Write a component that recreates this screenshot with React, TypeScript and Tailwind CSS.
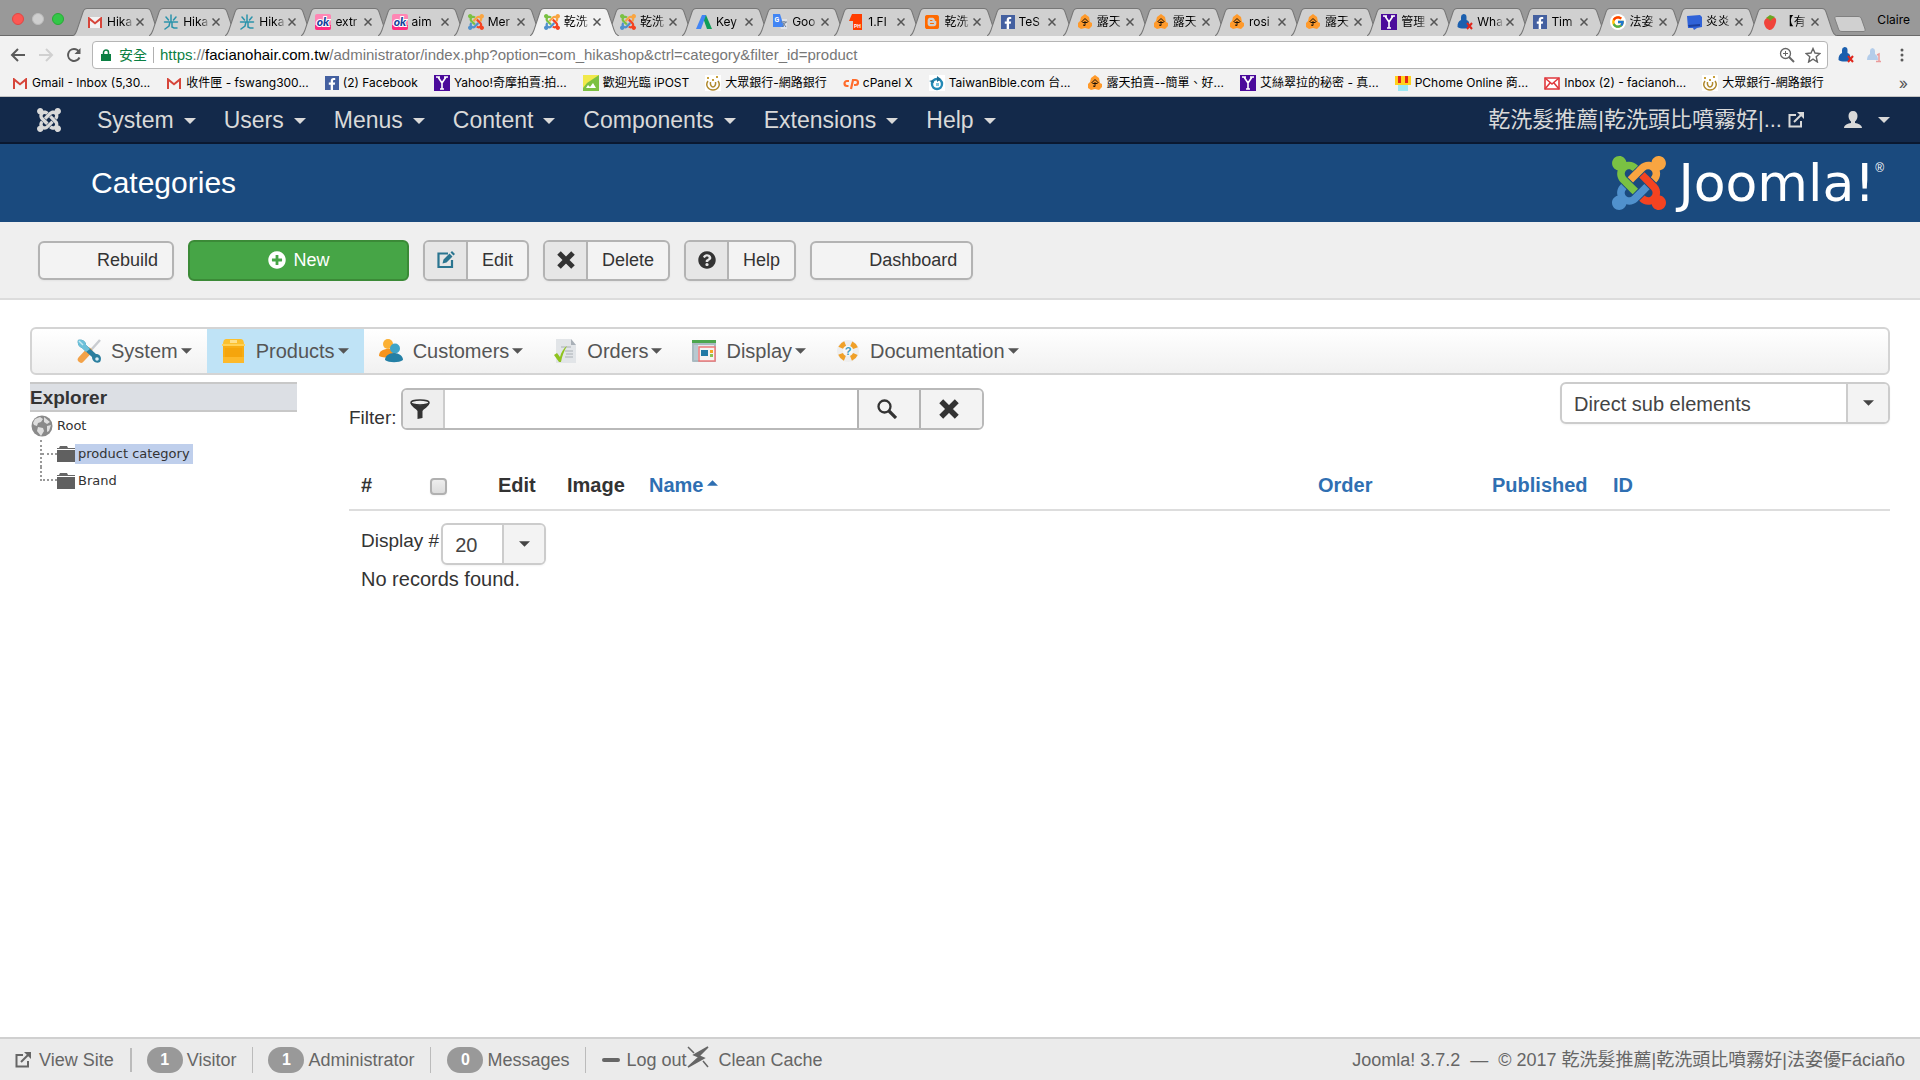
import React from 'react';
import { FaBlogger, FaFacebookF, FaQuestionCircle, FaPlusCircle } from 'react-icons/fa';
import { FcGoogle } from 'react-icons/fc';

const JOOMLA_ARMS = [
  {
    color: '#7ac143',
    d: 'M.6 92.1C.6 58.8 27.4 32 60.4 32c30 0 54.5 21.9 59.2 50.2 32.6-7.6 67.1.6 96.5 30l-44.3 44.3c-20.5-20.5-42.6-16.3-55.4-3.5-14.3 14.3-14.3 37.9 0 52.2l99.5 99.5-44 44.3c-87.7-87.2-49.7-49.7-99.8-99.7-26.8-26.5-35-64.8-24.8-98.9C20.4 144.6.6 120.7.6 92.1z',
  },
  {
    color: '#f9a541',
    d: 'M130.1 208.5l44.3 44.3c10-10 89.7-89.7 99.7-99.8 14.3-14.3 37.6-14.3 51.9 0 12.8 12.8 17 35-3.5 55.4l44 44.3c31.2-31.2 38.5-67.6 28.9-101.2 29.2-4.1 51.9-29.2 51.9-59.5 0-33.2-26.8-60.1-59.8-60.1-30.3 0-55.4 22.5-59.5 51.6-33.8-9.9-71.7-1.5-98.3 25.1-18.3 19.1-71.1 71.5-99.6 99.9z',
  },
  {
    color: '#f44321',
    d: 'M396.4 360.7c8.2-32.7-.9-68.5-26.3-93.9-11.8-12.2 5 4.7-99.5-99.7l-44.3 44.3 99.7 99.7c14.3 14.3 14.3 37.6 0 51.9-12.8 12.8-35 17-55.4-3.5l-44 44.3c27.6 30.2 68 38.8 102.7 28 5.5 27.4 29.7 48.1 58.9 48.1 33 0 59.8-26.8 59.8-60.1 0-30.2-22.5-55-51.6-59.1z',
  },
  {
    color: '#5091cd',
    d: 'M312.1 307.6l-44-44.3c-87 86.4-50.4 50.4-99.7 99.8-14.3 14.3-37.6 14.3-51.9 0-13.1-13.4-16.9-35.3 3.2-55.4l-44-44.3c-30.2 30.2-38 65.2-29.5 98.3-26.7 6-46.2 29.9-46.2 58.2C0 453.2 26.8 480 59.8 480c28.6 0 52.5-19.8 58.6-46.7 32.7 8.2 68.5-.6 94.2-26 32.1-32 12.2-12.4 99.5-99.7z',
  },
];

function JoomlaMark({ className, mono }: { className: string; mono?: boolean }) {
  return (
    <svg viewBox="0 32 448 448" className={className} aria-hidden="true">
      {JOOMLA_ARMS.map((arm) => (
        <path key={arm.color} d={arm.d} fill={mono ? 'currentColor' : arm.color} />
      ))}
    </svg>
  );
}

function Favicon({ kind }: { kind: string }) {
  switch (kind) {
    case 'joomla':
      return <JoomlaMark className="w-4 h-4 shrink-0" />;
    case 'google':
      return (
        <span className="w-4 h-4 shrink-0 rounded-full bg-white flex items-center justify-center">
          <FcGoogle className="w-3.5 h-3.5" />
        </span>
      );
    case 'facebook':
      return (
        <span className="w-3.5 h-3.5 shrink-0 bg-[#4460a0] flex items-end justify-end pr-0.5">
          <FaFacebookF className="w-2.5 h-3 text-white" />
        </span>
      );
    case 'blogger':
      return <FaBlogger className="w-4 h-4 shrink-0 text-[#ff6a00]" />;
    default:
      return (
        <svg viewBox="0 0 16 16" className="w-4 h-4 shrink-0" aria-hidden="true">
          {kind === 'gmail' && (
            <>
              <path d="M1 3h14v11H1z" fill="#f3f3f3" />
              <path d="M1 14V3h1l6 5 6-5h1v11h-2V6.500L8 10.500 3 6.500V14z" fill="#d6453a" />
            </>
          )}
          {kind === 'inbox' && (
            <>
              <path d="M1 3h14v11H1z" fill="#fff" stroke="#e0393e" strokeWidth="1.600" />
              <path d="M1 3l7 6 7-6M1 14l5-6M15 14l-5-6" fill="none" stroke="#e0393e" strokeWidth="1.600" />
            </>
          )}
          {kind === 'hika' && (
            <path
              d="M8 1v6M3 3l2.500 3M13 3l-2.500 3M1.500 8h13M7 8l-1 4-4 3M9 8v5l2 1h3"
              fill="none"
              stroke="#2b93ab"
              strokeWidth="1.500"
              strokeLinecap="round"
            />
          )}
          {kind === 'ok' && (
            <>
              <rect width="16" height="16" rx="2" fill="#ff86b4" />
              <path d="M0 11h16v3a2 2 0 01-2 2H2a2 2 0 01-2-2z" fill="#ff2d80" />
              <text x="8" y="12" textAnchor="middle" fontSize="12" fontWeight="900" fontStyle="italic" fontFamily="Lato, sans-serif" fill="#123f9c" stroke="#fff" strokeWidth="2" paintOrder="stroke">ok</text>
            </>
          )}
          {kind === 'ads' && (
            <>
              <path d="M6 1h4l6 14h-5z" fill="#0f9d58" />
              <path d="M6 1h4l-5 14H0z" fill="#4285f4" />
            </>
          )}
          {kind === 'translate' && (
            <>
              <path d="M6 5h9v10H9z" fill="#dfe3ea" />
              <path d="M1 0h7l4 13H1z" fill="#4285f4" />
              <text x="5" y="8" textAnchor="middle" fontSize="7" fontWeight="700" fontFamily="Roboto, sans-serif" fill="#fff">G</text>
              <path d="M9 8h6M12 7v1M10 13l4-5M11 9l3 4" stroke="#6b7c93" fill="none" />
            </>
          )}
          {kind === 'ph' && (
            <>
              <path d="M4 0h10v16H5V7H1z" fill="#ff3d00" />
              <text x="9.500" y="14" textAnchor="middle" fontSize="5" fontWeight="700" fontFamily="Roboto, sans-serif" fill="#fff">PH</text>
            </>
          )}
          {kind === 'ruten' && (
            <>
              <path d="M8 0l4 3 1 5 2 1v3l-3 3-4-1-4 1-3-2V9l2-2 1-4z" fill="#ff9a2b" />
              <path d="M4.500 8L8 4.500 11.500 8M5.500 8.500h5M8 7v4.500M6 11l2 .5" fill="none" stroke="#1c1208" />
            </>
          )}
          {kind === 'yahoo' && (
            <>
              <path d="M0 0h16v16H0z" fill="#4b0a9b" />
              <path d="M4 2l4 6 4-6M8 8v6M2 2h4M10 2h4M6 14h4" fill="none" stroke="#fff" strokeWidth="1.600" />
            </>
          )}
          {kind === 'person' && (
            <>
              <path d="M6.500 0a3 3 0 013 3v3c3 1 3 4 3 7-3 2-9 2-12 0 0-4 1-6 3.500-7V3a3 3 0 012.500-3z" fill="#1b5fae" />
              <path d="M10 9l5 6M15 9l-5 6" stroke="#e0261c" strokeWidth="2" />
            </>
          )}
          {kind === 'personFaded' && (
            <>
              <path d="M6.500 1a3 3 0 012.500 3v3c2 1 3 3 3 6H1c0-3 1-5 3-6V4a3 3 0 012.500-3z" fill="#b4cdea" />
              <path d="M11 8l2-1v7M10 14.500h5" stroke="#ea9c9c" strokeWidth="1.500" fill="none" />
            </>
          )}
          {kind === 'book' && (
            <>
              <path d="M1 2l13-1 2 2v10l-5 1-3 2-1-2H2z" fill="#2f62d8" />
              <path d="M2 11l12-1v2L3 13z" fill="#1b3f9e" />
            </>
          )}
          {kind === 'berry' && (
            <>
              <path d="M8 4c4-2 7 0 6 4-1 5-4 8-6 8s-5-2-6-7c0-4 3-6 6-5z" fill="#f0433a" />
              <path d="M4 4l4-3 5 2-3 2-2 2-1-2z" fill="#6aa522" />
            </>
          )}
          {kind === 'ipost' && (
            <>
              <path d="M0 0h16v16H0z" fill="#7cc142" />
              <path d="M0 0h16L4 8 0 13z" fill="#f1e94b" />
              <path d="M3 13l2-3 2 2 3-4 3 5z" fill="#fff" />
            </>
          )}
          {kind === 'bank' && (
            <>
              <path d="M0 0h16v16H0z" fill="#fff" />
              <path d="M3 6c-3 4 0 9 5 9s8-5 5-9M5.500 7c-.5 3 1 5 2.500 5s3-2 2.500-5" fill="none" stroke="#b08a2e" strokeWidth="1.500" />
              <path d="M2 2h2v2H2zM7 4h2v2H7zM11 1h2v2h-2z" fill="#c9a13d" />
            </>
          )}
          {kind === 'cpanel' && (
            <path d="M6 6H4a2.500 2.500 0 000 5h1.500M8 14l2-9h2.500a2.500 2.500 0 010 5H11" fill="none" stroke="#ff6c2c" strokeWidth="2.200" />
          )}
          {kind === 'bible' && (
            <>
              <path d="M0 0h16v16H0z" fill="#fff" />
              <circle cx="8" cy="9" r="5" fill="none" stroke="#2389b5" strokeWidth="2.400" />
              <path d="M8 1l4 3-4 3zM0 6l4-1 1 3z" fill="#1c6f96" />
              <path d="M7 8h3v3H7z" fill="#7dc4de" />
            </>
          )}
          {kind === 'pchome' && (
            <>
              <path d="M0 1h16v9H0z" fill="#ffd21c" />
              <path d="M3 1h3v7H3zM10 1h3v7h-3z" fill="#e5261c" />
              <path d="M3 10h10v6H3z" fill="#9be8f4" />
            </>
          )}
        </svg>
      );
  }
}

const tabs = [
  { icon: 'gmail', title: 'Hika' },
  { icon: 'hika', title: 'Hika' },
  { icon: 'hika', title: 'Hika' },
  { icon: 'ok', title: 'extr' },
  { icon: 'ok', title: 'aim' },
  { icon: 'joomla', title: 'Mer' },
  { icon: 'joomla', title: '乾洗', active: true },
  { icon: 'joomla', title: '乾洗' },
  { icon: 'ads', title: 'Key' },
  { icon: 'translate', title: 'Goo' },
  { icon: 'ph', title: '1.Fl' },
  { icon: 'blogger', title: '乾洗' },
  { icon: 'facebook', title: 'TeS' },
  { icon: 'ruten', title: '露天' },
  { icon: 'ruten', title: '露天' },
  { icon: 'ruten', title: 'rosi' },
  { icon: 'ruten', title: '露天' },
  { icon: 'yahoo', title: '管理' },
  { icon: 'person', title: 'Wha' },
  { icon: 'facebook', title: 'Tim' },
  { icon: 'google', title: '法姿' },
  { icon: 'book', title: '炎炎' },
  { icon: 'berry', title: '【有' },
];

const bookmarks = [
  { icon: 'gmail', title: 'Gmail - Inbox (5,30...' },
  { icon: 'gmail', title: '收件匣 - fswang300...' },
  { icon: 'facebook', title: '(2) Facebook' },
  { icon: 'yahoo', title: 'Yahoo!奇摩拍賣:拍...' },
  { icon: 'ipost', title: '歡迎光臨 iPOST' },
  { icon: 'bank', title: '大眾銀行-網路銀行' },
  { icon: 'cpanel', title: 'cPanel X' },
  { icon: 'bible', title: 'TaiwanBible.com 台...' },
  { icon: 'ruten', title: '露天拍賣--簡單、好...' },
  { icon: 'yahoo', title: '艾絲翠拉的秘密 - 真...' },
  { icon: 'pchome', title: 'PChome Online 商...' },
  { icon: 'inbox', title: 'Inbox (2) - facianoh...' },
  { icon: 'bank', title: '大眾銀行-網路銀行' },
];

function Browser() {
  return (
    <div className="bg-[#f2f2f2] text-black font-[Inter,'Noto_Sans_CJK_TC',sans-serif]">
      <div className="h-9 bg-[#999] border-b border-[#6b6b6b] flex">
        <div className="w-[73px] shrink-0 flex gap-2 pl-3 pt-[13px]">
          <span className="w-3 h-3 rounded-full bg-[#fc5753] border border-[#df4744]"></span>
          <span className="w-3 h-3 rounded-full bg-[#cfcfcf] border border-[#bdbdbd]"></span>
          <span className="w-3 h-3 rounded-full bg-[#33c748] border border-[#27aa35]"></span>
        </div>
        <ul className="flex-1 min-w-0 flex pt-2">
          {tabs.map((tab, idx) => (
            <li key={idx} className={`relative flex-1 min-w-0 h-7 ${tab.active ? 'z-10' : ''}`}>
              <svg viewBox="0 0 89 28" preserveAspectRatio="none" className="absolute top-0 left-0 h-full w-[117%]" aria-hidden="true">
                <path
                  d="M0 28C2 27 3 25 4 22L10 4C11 1 12 .5 14 .5H74C76 .5 77 1 78 4L84 22C85 25 86 27 89 28"
                  fill={tab.active ? '#f2f2f2' : '#d0d0d0'}
                  stroke="#777"
                />
              </svg>
              <div className="relative h-full flex items-center pl-3.5">
                <Favicon kind={tab.icon} />
                <span className="ml-1 w-[27px] overflow-hidden whitespace-nowrap text-xs [mask-image:linear-gradient(to_right,#000_65%,transparent)]">
                  {tab.title}
                </span>
                <button type="button" aria-label="Close tab" className="shrink-0 ml-0.5">
                  <svg viewBox="0 0 8 8" className="w-2 h-2">
                    <path d="M.5.5l7 7M7.500.5l-7 7" stroke="#555" strokeWidth="1.500" />
                  </svg>
                </button>
              </div>
            </li>
          ))}
        </ul>
        <div className="w-[96px] shrink-0 flex justify-between pr-2.5 pl-2.5">
          <button type="button" aria-label="New tab" className="mt-4 h-4">
            <svg viewBox="0 0 32 16" className="w-8 h-4">
              <path d="M3 .5h21c2 0 3 1 3.500 2.500L31 13c.5 2 0 2.500-2 2.500H8c-2 0-3-1-3.500-2.500L1 3C.5 1 1 .5 3 .5z" fill="#d0d0d0" stroke="#808080" />
            </svg>
          </button>
          <span className="mt-3 text-xs">Claire</span>
        </div>
      </div>

      <div className="flex items-center h-[39px] pl-2.5 pr-4 pb-px">
        <svg viewBox="0 0 16 16" className="w-4 h-4 shrink-0" fill="none" stroke="#5a5a5a" strokeWidth="2">
          <path d="M15 8H2M8 2L2 8l6 6" />
        </svg>
        <svg viewBox="0 0 16 16" className="w-4 h-4 shrink-0 ml-3" fill="none" stroke="#d0d0d0" strokeWidth="2">
          <path d="M1 8h13M8 2l6 6-6 6" />
        </svg>
        <svg viewBox="0 0 16 16" className="w-4 h-4 shrink-0 ml-3" fill="none" stroke="#5a5a5a" strokeWidth="2">
          <path d="M13.500 10.500A6 6 0 118 2c2 0 4 1 5 3" />
          <path d="M14.500 1v6h-6z" fill="#5a5a5a" stroke="none" />
        </svg>
        <div className="flex-1 min-w-0 ml-2.5 h-7 bg-white border border-[#b5b5b5] rounded flex items-center pl-2 pr-1.5 font-['Liberation_Sans','Noto_Sans_CJK_TC',sans-serif] text-sm">
          <svg viewBox="0 0 10 12" className="w-2.5 h-3 shrink-0">
            <path d="M0 5h10v7H0z" fill="#0b8043" />
            <path d="M2.500 6V3.500a2.500 2.500 0 015 0V6" fill="none" stroke="#0b8043" strokeWidth="1.500" />
          </svg>
          <span className="ml-2 text-[#0b8043]">安全</span>
          <span className="ml-1.5 mr-1.5 w-px h-4 bg-[#b0b0b0]"></span>
          <span className="text-[#777] text-[15px] truncate flex-1">
            <span className="text-[#0b8043]">https</span>://<span className="text-black">facianohair.com.tw</span>
            /administrator/index.php?option=com_hikashop&amp;ctrl=category&amp;filter_id=product
          </span>
          <svg viewBox="0 0 16 16" className="w-4 h-4 shrink-0" fill="none" stroke="#666">
            <circle cx="6.500" cy="6.500" r="5" strokeWidth="1.300" />
            <path d="M10 10l5 5" strokeWidth="2" />
            <path d="M4 6.500h5M6.500 4v5" />
          </svg>
          <svg viewBox="0 0 16 16" className="w-4 h-4 shrink-0 ml-2.5" fill="none" stroke="#666" strokeWidth="1.400">
            <path d="M8 1.500l2 4.500 5 .5-3.800 3.200L12.400 15 8 12.200 3.600 15l1.200-5.300L1 6.500 6 6z" />
          </svg>
        </div>
        <div className="ml-2.5 flex items-center gap-3">
          <Favicon kind="person" />
          <Favicon kind="personFaded" />
          <svg viewBox="0 0 4 16" className="w-1 h-4 ml-1.5" fill="#5a5a5a">
            <circle cx="2" cy="3" r="1.500" />
            <circle cx="2" cy="8" r="1.500" />
            <circle cx="2" cy="13" r="1.500" />
          </svg>
        </div>
      </div>

      <div className="h-[22px] border-b border-[#c4c4c4] flex items-start px-3 text-xs">
        <ul className="flex-1 min-w-0 overflow-hidden flex gap-4">
          {bookmarks.map((b, idx) => (
            <li key={idx}>
              <a href="#" className="flex items-center gap-1 whitespace-nowrap">
                <Favicon kind={b.icon} />
                {b.title}
              </a>
            </li>
          ))}
        </ul>
        <span className="text-[#555] text-base leading-4">»</span>
      </div>
    </div>
  );
}

function Caret({ className }: { className: string }) {
  return (
    <svg viewBox="0 0 12 6" className={className} fill="currentColor" aria-hidden="true">
      <path d="M0 0h12L6 6z" />
    </svg>
  );
}

function OutIcon({ className }: { className: string }) {
  return (
    <svg viewBox="0 0 16 16" className={className} fill="none" stroke="currentColor" strokeWidth="2" aria-hidden="true">
      <path d="M8 3H1.500v11.500H13V9" />
      <path d="M6 10l7-7" />
      <path d="M9 0h7v7z" fill="currentColor" stroke="none" />
    </svg>
  );
}

function CrossIcon({ className }: { className: string }) {
  return (
    <svg viewBox="0 0 18 18" className={className} aria-hidden="true">
      <path d="M2 2l14 14M16 2L2 16" stroke="#333" strokeWidth="5" />
    </svg>
  );
}

function MenuIcon({ kind }: { kind: string }) {
  return (
    <svg viewBox="0 0 24 24" className="w-6 h-6 shrink-0" aria-hidden="true">
      {kind === 'system' && (
        <>
          <path d="M23 1l-9 10" stroke="#c9ccd0" strokeWidth="2.500" />
          <path d="M12 12l-8 8.500" stroke="#f3a248" strokeWidth="6.500" strokeLinecap="round" />
          <path d="M1 1c4-1 8 1 8 5l10 9c5 0 6 5 4 8-4 2-8-1-8-5L5 9C2 8 0 5 1 1z" fill="#2c7f9f" />
          <path d="M1 1c4-1 8 1 8 5l4 4-4 3-4-4C2 8 0 5 1 1z" fill="#6cc0d9" />
          <path d="M2 2l4 4" stroke="#c6e8f2" strokeWidth="1.500" />
          <circle cx="20" cy="20" r="1.800" fill="#d9f0f7" />
        </>
      )}
      {kind === 'products' && (
        <>
          <path d="M4 0h15c2 0 3 2 3 6H1c0-4 1-6 3-6z" fill="#fcc02e" />
          <path d="M8 1h7v3H8z" fill="#ffe08a" />
          <path d="M1 7h21v17H1z" fill="#f8ad14" />
          <path d="M3 9h17v9H3z" fill="#f5a50c" />
          <path d="M1 18h21v6H1z" fill="#fdb92a" />
          <path d="M0 5h23v2H0z" fill="#ffd257" />
        </>
      )}
      {kind === 'customers' && (
        <>
          <circle cx="9" cy="5" r="5" fill="#fbb034" />
          <path d="M0 17c0-5 4-7 9-7s8 2 8 7c-5 2-12 2-17 0z" fill="#f7941d" />
          <circle cx="16" cy="9.500" r="5" fill="#3fa4c8" />
          <path d="M6 21c0-4 4-7 9-7s9 3 9 7c-4 3-14 3-18 0z" fill="#2480a6" />
        </>
      )}
      {kind === 'orders' && (
        <>
          <path d="M3 0h15l5 6v18H3z" fill="#e2e5e8" />
          <path d="M18 0v6h5z" fill="#a9b0b7" />
          <path d="M8 8h10M12 12h8M13 15h7M12 18h8" stroke="#aab0b5" />
          <path d="M1 16l3-2 3 4C8 13 11 9 14 7c-3 5-5 10-6 16H6z" fill="#8fc31f" />
        </>
      )}
      {kind === 'display' && (
        <>
          <rect x="0" y="1" width="24" height="22" rx="1" fill="#a9bac1" />
          <path d="M0 1h24v3H0z" fill="#4da64d" />
          <path d="M2 6h20v15H2z" fill="#e4ebee" />
          <path d="M2 6h4v15H2z" fill="#b8c9d1" />
          <rect x="7" y="8" width="16" height="14" fill="#f4f4f4" stroke="#ee7a7a" strokeWidth="1.500" />
          <path d="M9 11h7v6H9z" fill="#2079a5" />
          <path d="M18 11h3v3h-3z" fill="#f6a623" />
          <path d="M18 15h3v3h-3z" fill="#8cc152" />
        </>
      )}
      {kind === 'documentation' && (
        <>
          <circle cx="12" cy="12" r="8" fill="none" stroke="#eeeeee" strokeWidth="6" />
          <circle cx="12" cy="12" r="8" fill="none" stroke="#f0a028" strokeWidth="5" strokeDasharray="6.280 6.280" strokeDashoffset="-3.140" />
          <text x="12" y="16" textAnchor="middle" fontSize="11" fontWeight="700" fontFamily="Liberation Sans, sans-serif" fill="#3a9bc1">?</text>
        </>
      )}
    </svg>
  );
}

const navItems = ['System', 'Users', 'Menus', 'Content', 'Components', 'Extensions', 'Help'];

const hikaMenu = [
  { icon: 'system', label: 'System' },
  { icon: 'products', label: 'Products', active: true },
  { icon: 'customers', label: 'Customers' },
  { icon: 'orders', label: 'Orders' },
  { icon: 'display', label: 'Display' },
  { icon: 'documentation', label: 'Documentation' },
];

function ToolButton({ icon, label }: { icon: React.ReactNode; label: string }) {
  return (
    <button type="button" className="h-[41px] flex items-stretch border-2 border-[#b3b3b3] rounded-md bg-[#f3f3f3] text-[#333] text-lg overflow-hidden shadow-xs">
      <span className="w-[43px] bg-[#e6e6e6] border-r-2 border-[#b3b3b3] flex items-center justify-center">{icon}</span>
      <span className="px-3.5 self-center">{label}</span>
    </button>
  );
}

function SelectBox({ id, label, value, className }: { id: string; label?: string; value: string; className: string }) {
  return (
    <div className={`relative h-[42px] border-2 border-[#ccc] rounded-md bg-white shadow-xs ${className}`}>
      <select id={id} aria-label={label} className="appearance-none w-full h-full pl-3 pt-0.5 bg-transparent text-[#444] outline-none">
        <option>{value}</option>
      </select>
      <span className="absolute inset-y-0 right-0 w-[42px] border-l-2 border-[#ccc] bg-[#f3f3f3] rounded-r flex items-center justify-center pointer-events-none">
        <Caret className="w-[11px] h-1.5 text-[#444]" />
      </span>
    </div>
  );
}

function Folder() {
  return (
    <svg viewBox="0 0 18 16" className="w-[18px] h-4 shrink-0" aria-hidden="true">
      <path d="M3 0h7l1 2h7v1H0V2h2z" fill="#666" />
      <path d="M0 4h18v12H0z" fill="#606060" />
    </svg>
  );
}

function Explorer() {
  return (
    <aside className="w-[267px] shrink-0">
      <h2 className="h-[30px] bg-[#dcdfe4] border-y-2 border-[#c8c8c8] text-[19px] font-bold leading-7">Explorer</h2>
      <ul className="font-['DejaVu_Sans',sans-serif] text-[13px]">
        <li className="h-7 flex items-center pl-px">
          <svg viewBox="0 0 22 22" className="w-[22px] h-[22px]" aria-hidden="true">
            <circle cx="11" cy="11" r="10.500" fill="#8a8a8a" />
            <path d="M4 4l5-2 3 2-2 3-3 1-1 3-3-1-1-2zM13 2l6 5-3 2-3-2zM7 12l5 1 1 3-3 5-4-5zM16 11l4-1-2 6-2 1z" fill="#dedede" />
          </svg>
          <a href="#" className="ml-1">Root</a>
        </li>
        <li className="h-[27px] flex items-center pl-2.5">
          <span className="w-[17px] h-[27px] border-l-2 border-dotted border-[#999] flex items-center">
            <span className="w-full border-t-2 border-dotted border-[#999]"></span>
          </span>
          <Folder />
          <a href="#" className="h-5 leading-5 px-[3px] bg-[#bfcfec]">product category</a>
        </li>
        <li className="h-[27px] flex items-center pl-2.5">
          <span className="w-[17px] h-[27px]">
            <span className="block h-3.5 border-l-2 border-b-2 border-dotted border-[#999]"></span>
          </span>
          <Folder />
          <a href="#" className="px-[3px]">Brand</a>
        </li>
      </ul>
    </aside>
  );
}

export default function App() {
  return (
    <div className="min-h-screen flex flex-col bg-white text-[#333] text-xl leading-7 font-['Liberation_Sans','Noto_Sans_CJK_TC',sans-serif]">
      <Browser />

      <nav className="h-[47px] bg-[#13294a] border-b-2 border-[#0a1830] text-[#d9d9d9] flex items-center pl-[37px] pr-[30px]">
        <JoomlaMark mono className="w-6 h-6 shrink-0" />
        <ul className="flex gap-7 ml-9 text-[23px]">
          {navItems.map((item) => (
            <li key={item}>
              <a href="#" className="flex items-center gap-2.5">
                {item}
                <Caret className="w-3 h-1.5 mt-0.5" />
              </a>
            </li>
          ))}
        </ul>
        <a href="#" className="ml-auto flex items-center gap-1.5 whitespace-nowrap text-[22px]">
          乾洗髮推薦|乾洗頭比噴霧好|...
          <OutIcon className="w-4 h-4" />
        </a>
        <button type="button" aria-label="User menu" className="ml-10 flex items-center gap-4">
          <svg viewBox="0 0 18 18" className="w-[18px] h-[18px]" fill="currentColor">
            <path d="M9 0c3 0 4.500 2 4.500 5S12 9.500 11 10.500V12c3 .5 7 2 7 5H0c0-3 4-4.500 7-5v-1.500C6 9.500 4.500 8 4.500 5S6 0 9 0z" />
          </svg>
          <Caret className="w-3 h-1.5" />
        </button>
      </nav>

      <header className="h-[78px] bg-[#1a4a7e] flex items-center justify-between pl-[91px] pr-9">
        <h1 className="text-white text-3xl">Categories</h1>
        <div className="flex items-center text-white">
          <JoomlaMark className="w-[54px] h-[54px]" />
          <span className="ml-3 font-['DejaVu_Sans',sans-serif] text-[52px] leading-[54px]">Joomla!</span>
          <span className="self-start mt-1.5 text-xs leading-3">®</span>
        </div>
      </header>

      <div className="h-[78px] bg-[#efefef] border-b-2 border-[#dcdcdc] flex items-center gap-3.5 px-[38px] text-lg">
        <button type="button" className="h-[39px] border-2 border-[#b3b3b3] rounded-md bg-[#f3f3f3] pl-[57px] pr-3.5 shadow-xs">Rebuild</button>
        <button type="button" className="h-[41px] w-[221px] border-2 border-[#3b8a37] rounded-md bg-[#46a546] text-white flex items-center justify-center gap-2">
          <FaPlusCircle className="w-[18px] h-[18px]" />
          New
        </button>
        <ToolButton
          label="Edit"
          icon={
            <svg viewBox="0 0 18 18" className="w-[18px] h-[18px]" fill="none" stroke="#2a7590" strokeWidth="2.200">
              <path d="M11 2.500H1.500v13.500H15V9" />
              <path d="M5.500 12.500l1-4 6-6 3 3-6 6zM13.500 1.500l1.500-1.500 3 3-1.500 1.500z" fill="#2a7590" stroke="none" />
            </svg>
          }
        />
        <ToolButton label="Delete" icon={<CrossIcon className="w-[18px] h-[18px]" />} />
        <ToolButton label="Help" icon={<FaQuestionCircle className="w-[18px] h-[18px]" />} />
        <button type="button" className="h-[39px] border-2 border-[#b3b3b3] rounded-md bg-[#f3f3f3] pl-[57px] pr-3.5 shadow-xs">Dashboard</button>
      </div>

      <main className="flex-1 px-[30px] pt-[27px]">
        <ul className="h-12 border-2 border-[#d4d4d4] rounded-md bg-linear-to-b from-white to-[#f1f1f1] flex pl-[30px] text-[#555]">
          {hikaMenu.map((item) => (
            <li key={item.label} className={item.active ? 'bg-[#bfe3f6]' : ''}>
              <a href="#" className="h-full flex items-center px-[15px]">
                <MenuIcon kind={item.icon} />
                <span className="ml-2.5">{item.label}</span>
                <Caret className="w-[11px] h-1.5 ml-[3px]" />
              </a>
            </li>
          ))}
        </ul>

        <div className="flex gap-[52px] mt-[7px]">
          <Explorer />

          <section className="flex-1 min-w-0">
            <div className="flex justify-between items-start">
              <div className="flex mt-1.5">
                <label htmlFor="filter" className="mt-4 mr-1 text-[19px]">Filter:</label>
                <div className="flex h-[42px] rounded-md border-2 border-[#b9b9b9] overflow-hidden">
                  <span className="w-[42px] bg-[#eee] border-r-2 border-[#ccc] flex items-center justify-center">
                    <svg viewBox="0 0 20 20" className="w-5 h-5 -ml-1.5" aria-hidden="true">
                      <ellipse cx="10" cy="3.500" rx="9" ry="2.500" fill="#eee" stroke="#333" strokeWidth="1.500" />
                      <path d="M.5 4c3 3 16 3 19 0 0 3-6 6-7 8v7l-5 1v-8C6.500 10 .5 7 .5 4z" fill="#333" />
                    </svg>
                  </span>
                  <input id="filter" type="text" className="w-[412px] px-3 outline-none" />
                  <button type="button" aria-label="Search" className="w-[62px] bg-[#f3f3f3] border-l-2 border-[#b3b3b3] flex items-center justify-center pr-1">
                    <svg viewBox="0 0 20 20" className="w-5 h-5" fill="none" stroke="#333">
                      <circle cx="7.500" cy="7.500" r="6" strokeWidth="2.300" />
                      <path d="M12 12l7 7" strokeWidth="3.200" />
                    </svg>
                  </button>
                  <button type="button" aria-label="Clear" className="w-[63px] bg-[#f3f3f3] border-l-2 border-[#b3b3b3] flex items-center justify-center pr-1">
                    <CrossIcon className="w-5 h-5" />
                  </button>
                </div>
              </div>
              <SelectBox id="sub" label="Elements" value="Direct sub elements" className="w-[330px]" />
            </div>

            <table className="w-full table-fixed mt-7 text-left">
              <thead>
                <tr className="h-[50px] border-b-2 border-[#ddd]">
                  <th className="w-[69px] pl-3">#</th>
                  <th className="w-[68px] pl-3">
                    <input type="checkbox" aria-label="Select all" className="block appearance-none w-[17px] h-[17px] mt-1 rounded border-2 border-[#b0b0b0] bg-linear-to-b from-[#eee] to-[#dcdcdc] shadow-xs" />
                  </th>
                  <th className="w-[69px] pl-3">Edit</th>
                  <th className="w-[82px] pl-3">Image</th>
                  <th className="pl-3">
                    <a href="#" className="flex items-center gap-1 text-[#2f6fb2]">
                      Name
                      <Caret className="w-[11px] h-1.5 rotate-180 -mt-1" />
                    </a>
                  </th>
                  <th className="w-[174px] pl-3"><a href="#" className="text-[#2f6fb2]">Order</a></th>
                  <th className="w-[121px] pl-3"><a href="#" className="text-[#2f6fb2]">Published</a></th>
                  <th className="w-[289px] pl-3"><a href="#" className="text-[#2f6fb2]">ID</a></th>
                </tr>
              </thead>
              <tbody>
                <tr>
                  <td colSpan={8} className="pl-3 pt-3">
                    <div className="flex">
                      <label htmlFor="limit" className="mt-1 mr-0.5 text-[19px]">Display #</label>
                      <SelectBox id="limit" value="20" className="w-[105px]" />
                    </div>
                    <p>No records found.</p>
                  </td>
                </tr>
              </tbody>
            </table>
          </section>
        </div>
      </main>

      <footer className="h-[43px] bg-[#ebebeb] border-t-2 border-[#d0d0d0] text-[#666] text-lg flex items-center justify-between px-[15px]">
        <div className="flex items-center">
          <a href="#" className="flex items-center gap-2 pr-4 border-r-2 border-[#bbb] leading-6">
            <OutIcon className="w-4 h-4" />
            View Site
          </a>
          <span className="flex items-center gap-1 px-4 pl-[15px] border-r border-[#bbb] leading-6">
            <span className="w-9 h-[26px] rounded-full bg-[#999] text-white text-base font-bold text-center leading-[26px]">1</span>
            Visitor
          </span>
          <span className="flex items-center gap-1 px-4 pl-[15px] border-r border-[#bbb] leading-6">
            <span className="w-9 h-[26px] rounded-full bg-[#999] text-white text-base font-bold text-center leading-[26px]">1</span>
            Administrator
          </span>
          <a href="#" className="flex items-center gap-1 px-4 border-r border-[#bbb] leading-6">
            <span className="w-9 h-[26px] rounded-full bg-[#999] text-white text-base font-bold text-center leading-[26px]">0</span>
            Messages
          </a>
          <a href="#" className="flex items-center gap-1.5 pl-4">
            <span className="w-[18px] h-1 rounded-xs bg-[#666]"></span>
            Log out
          </a>
          <a href="#" className="flex items-center gap-2.5">
            <svg viewBox="0 0 22 22" className="w-[22px] h-[22px] mb-1.5" aria-hidden="true">
              <path d="M21 1L7 9l5 2L1 21l16-9-5-2z" fill="#666" stroke="#666" strokeWidth="1.500" />
              <path d="M1 1l6 6M16 15l5 6" stroke="#666" strokeWidth="1.500" />
            </svg>
            Clean Cache
          </a>
        </div>
        <p className="whitespace-pre">Joomla! 3.7.2  —  © 2017 乾洗髮推薦|乾洗頭比噴霧好|法姿優Fáciaño</p>
      </footer>
    </div>
  );
}
